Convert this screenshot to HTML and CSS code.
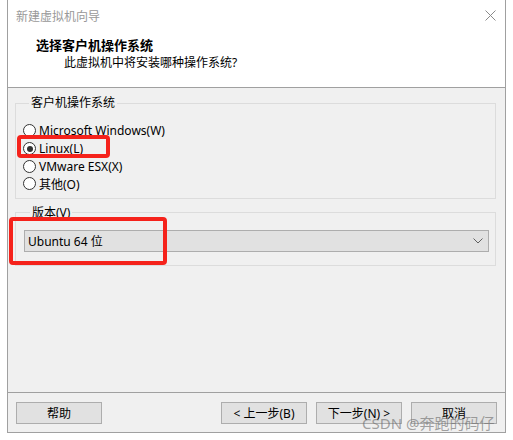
FILE: index.html
```html
<!DOCTYPE html>
<html lang="zh">
<head>
<meta charset="utf-8">
<link rel="stylesheet" href="styles.css">
</head>
<body>
<div class="window">
  <div class="titlebar">
    <span class="title-text">新建虚拟机向导</span>
    <svg class="close" width="11" height="11" viewBox="0 0 11 11"><path d="M0.5 0.5 L10.5 10.5 M10.5 0.5 L0.5 10.5" stroke="#8a8a8a" stroke-width="1" fill="none"/></svg>
  </div>
  <div class="header">
    <div class="h-title">选择客户机操作系统</div>
    <div class="h-sub">此虚拟机中将安装哪种操作系统?</div>
  </div>
  <div class="content">
    <fieldset class="group os">
      <legend>客户机操作系统</legend>
      <div class="radio"><span class="dot"></span><span>Microsoft Windows(W)</span></div>
      <div class="radio checked"><span class="dot"></span><span>Linux(L)</span></div>
      <div class="radio"><span class="dot"></span><span>VMware ESX(X)</span></div>
      <div class="radio"><span class="dot"></span><span>其他(O)</span></div>
    </fieldset>
    <fieldset class="group ver">
      <legend>版本(V)</legend>
      <div class="select">
        <span>Ubuntu 64 位</span>
        <svg class="chev" width="10" height="6" viewBox="0 0 10 6"><path d="M0.5 0.5 L5 5 L9.5 0.5" stroke="#606060" stroke-width="1" fill="none"/></svg>
      </div>
    </fieldset>
  </div>
  <div class="footer">
    <div class="btn">帮助</div>
    <div class="spacer"></div>
    <div class="btn">&lt; 上一步(B)</div>
    <div class="btn">下一步(N) &gt;</div>
    <div class="btn">取消</div>
  </div>
  <div class="mark mark1"></div>
  <div class="mark mark2"></div>
  <div class="watermark">CSDN @奔跑的码仔</div>
</div>
</body>
</html>
```
FILE: styles.css
```css
* { box-sizing: border-box; }
html, body { margin: 0; padding: 0; background: #ffffff; }
body {
  font-family: "Noto Sans", "Noto Sans CJK SC", sans-serif;
  font-size: 12px;
  color: #000;
}
.window {
  position: relative;
  margin-left: 7px;
  width: 499px;
  height: 433px;
  border: 1px solid #a0a0a0;
  border-top: none;
  display: flex;
  flex-direction: column;
  background: #f0f0f0;
}
.titlebar {
  height: 29px;
  background: #fff;
  display: flex;
  align-items: center;
  padding: 2px 0 0 8px;
  justify-content: space-between;
}
.title-text { color: #999; font-size: 12px; }
.close { margin-right: 9px; }
.header {
  height: 59px;
  background: #fff;
  border-bottom: 1px solid #a0a0a0;
  padding: 7px 0 0 28px;
}
.h-title { font-weight: bold; font-size: 13px; line-height: 18px; }
.h-sub { padding-left: 28px; line-height: 18px; }
.content {
  height: 304px;
  padding: 7px 9px 0 7px;
}
.group {
  margin: 0;
  border: 1px solid #dcdcdc;
  padding: 0;
  min-width: 0;
}
.group legend {
  margin-left: 6px;
  padding: 0 2px;
  line-height: 16px;
}
.os { padding: 11px 0 5px 7px; }
.radio {
  display: flex;
  align-items: center;
  height: 17.7px;
  gap: 3px;
}
.dot {
  width: 13px; height: 13px;
  border: 1px solid #333;
  border-radius: 50%;
  background: #fff;
  position: relative;
}
.checked .dot::after {
  content: "";
  position: absolute;
  left: 2.5px; top: 2.5px;
  width: 6px; height: 6px;
  border-radius: 50%;
  background: #333;
}
.ver { margin-top: 6px; padding: 9px 6px 13px 8px; }
.select {
  height: 22px;
  border: 1px solid #adadad;
  background: #e1e1e1;
  display: flex;
  align-items: center;
  justify-content: space-between;
  padding: 0 5px 0 3px;
}
.footer {
  height: 40px;
  border-top: 1px solid #a0a0a0;
  display: flex;
  padding: 9px 8px 0 8px;
  gap: 9px;
}
.spacer { flex: 1; }
.btn {
  width: 86px;
  height: 22px;
  border: 1px solid #adadad;
  background: #e1e1e1;
  display: flex;
  align-items: center;
  justify-content: center;
}
.mark {
  position: absolute;
  border: 4px solid #f5221b;
  border-radius: 4px;
}
.mark1 { left: 9px; top: 135px; width: 93px; height: 23px; }
.mark2 { left: 1px; top: 217px; width: 158px; height: 48px; }
.watermark {
  position: absolute;
  left: 354px;
  top: 413px;
  font-size: 15px;
  line-height: 20px;
  color: rgba(105,105,105,0.6);
  white-space: nowrap;
}
```
